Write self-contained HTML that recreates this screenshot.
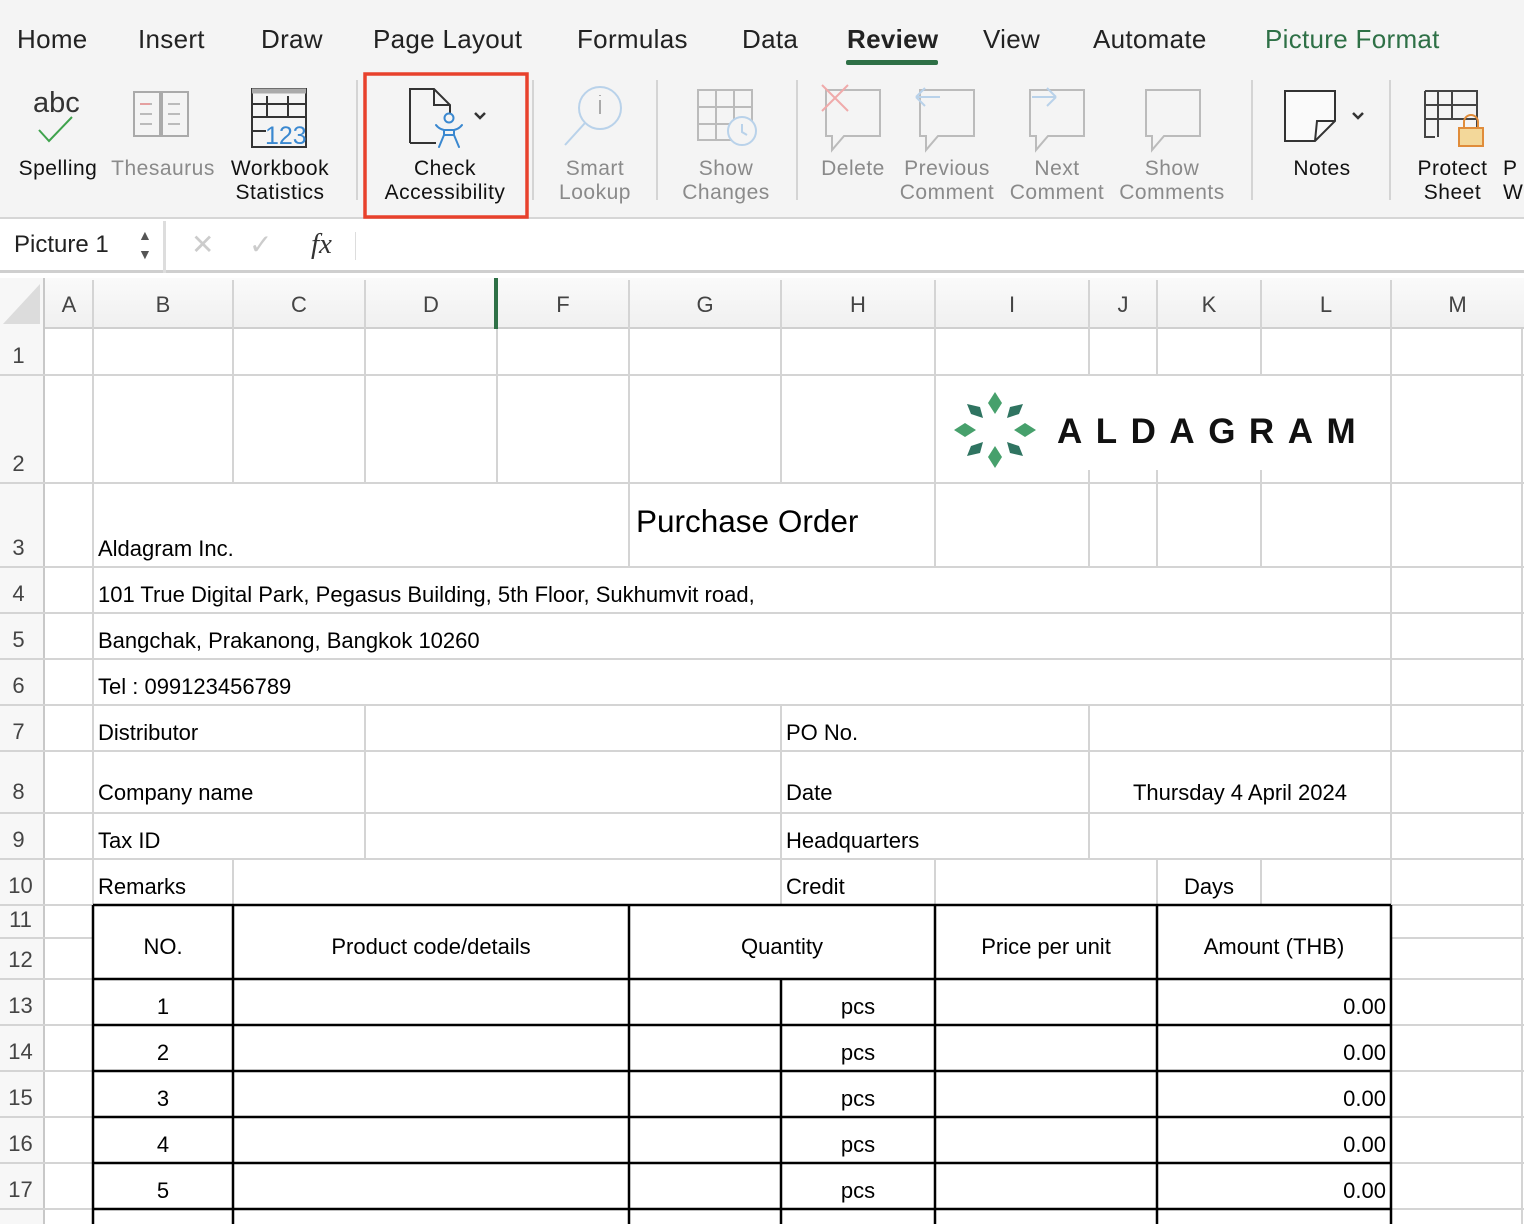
<!DOCTYPE html>
<html><head><meta charset="utf-8"><style>
*{margin:0;padding:0;box-sizing:border-box}
body{width:1524px;height:1224px;overflow:hidden;background:#fff;font-family:"Liberation Sans",sans-serif;position:relative}
.a{position:absolute;white-space:nowrap}
.tab{font-size:26px;color:#222;top:24px;letter-spacing:0.3px}
.rl{font-size:21px;color:#111;text-align:center;line-height:24px;letter-spacing:0.5px}
.g{color:#8a8a8a}
.c{font-size:22px;color:#000}
.rh{font-size:22px;color:#444;width:45px;text-align:center}
.ch{font-size:22px;color:#444;text-align:center;top:292px}
</style></head><body>
<div class="a" style="left:0;top:0;width:1524px;height:219px;background:#f4f4f4;border-bottom:2px solid #d6d6d6"></div>
<div class="a tab" style="left:17px">Home</div>
<div class="a tab" style="left:138px">Insert</div>
<div class="a tab" style="left:261px">Draw</div>
<div class="a tab" style="left:373px">Page Layout</div>
<div class="a tab" style="left:577px">Formulas</div>
<div class="a tab" style="left:742px">Data</div>
<div class="a tab" style="left:847px;font-weight:bold">Review</div>
<div class="a" style="left:846px;top:60px;width:92px;height:5px;background:#2e7046;border-radius:2px"></div>
<div class="a tab" style="left:983px">View</div>
<div class="a tab" style="left:1093px">Automate</div>
<div class="a tab" style="left:1265px;color:#2e7046">Picture Format</div>

<svg class="a" style="left:0;top:0" width="1524" height="220">
<g fill="none" stroke-width="2">
<text x="33" y="112" font-size="29" fill="#333" font-family="Liberation Sans">abc</text>
<path d="M39 130l10 11 23-24" stroke="#3fa34d"/>
<path d="M134 92h26v44h-26zM162 92h26v44h-26z" stroke="#aaa"/>
<path d="M140 104h12M140 114h12M140 124h12M168 104h12M168 114h12M168 124h12" stroke="#bbb"/>
<path d="M140 104h10" stroke="#e5a0a0"/>
<path d="M252 89h54v58h-54z" stroke="#333"/><path d="M252 91h54" stroke="#aaa" stroke-width="5"/>
<path d="M252 104h54M252 117h54M252 131h14M267 96v20M288 96v20" stroke="#333"/>
<text x="265" y="144" font-size="25" fill="#3a88d0" font-family="Liberation Sans">123</text>
<path d="M410 143V89h24l16 16v8M410 143h26" stroke="#333"/><path d="M434 89v16h16" stroke="#333"/>
<circle cx="449" cy="118" r="4.5" stroke="#3a88d0"/>
<path d="M436 125q3 4 8 5h10q5-1 8-5M444 130v5l-5 12M454 130v5l5 12M444 135h10" stroke="#3a88d0" stroke-linejoin="round" stroke-linecap="round"/>
<path d="M475 113l5 5 5-5" stroke="#333" stroke-width="2.5"/>
<circle cx="600" cy="108" r="21" stroke="#b9d2ea"/><path d="M585 123l-20 22" stroke="#b9d2ea"/><path d="M600 100v14M600 95v1" stroke="#aaa"/>
<path d="M698 90h54v50h-54zM698 107h54M698 124h40M716 90v50M734 90v30" stroke="#bbb"/>
<circle cx="742" cy="131" r="14" fill="#f4f4f4" stroke="#b9d2ea"/><path d="M742 124v8l5 3" stroke="#b9d2ea"/>
<path d="M826 90h54v46h-36l-12 14v-14h-6z" stroke="#bbb"/><path d="M822 85l26 26M848 85l-26 26" stroke="#f0aaaa"/>
<path d="M920 90h54v46h-36l-12 14v-14h-6z" stroke="#bbb"/><path d="M916 97h24M916 97l9-9M916 97l9 9" stroke="#b9d2ea"/>
<path d="M1030 90h54v46h-36l-12 14v-14h-6z" stroke="#bbb"/><path d="M1032 97h24M1056 97l-9-9M1056 97l-9 9" stroke="#b9d2ea"/>
<path d="M1146 90h54v46h-36l-12 14v-14h-6z" stroke="#bbb"/>
<path d="M1285 91h50v30l-20 20h-30z" stroke="#333" fill="#fafafa"/><path d="M1335 121h-18l-2 20" stroke="#333"/>
<path d="M1353 113l5 5 5-5" stroke="#333" stroke-width="2.5"/>
<path d="M1425 91h52v42h-18M1425 91v46h10M1425 105h52M1425 119h52M1438 91v46M1452 91v28" stroke="#444"/>
<rect x="1459" y="128" width="24" height="18" fill="#f3d89a" stroke="#e08c3a"/><path d="M1464 128v-6a7 7 0 0 1 14 0v6" stroke="#e08c3a"/>
<path d="M357 80v120M533 80v120M657 80v120M797 80v120M1252 80v120M1390 80v120" stroke="#d4d4d4"/>
</g>
<rect x="365" y="74" width="162" height="143" fill="none" stroke="#e8412c" stroke-width="3.5"/>
</svg>
<div class="a rl" style="left:8px;top:157px;width:100px">Spelling</div>
<div class="a rl g" style="left:108px;top:157px;width:110px">Thesaurus</div>
<div class="a rl" style="left:222px;top:157px;width:116px">Workbook<br>Statistics</div>
<div class="a rl" style="left:370px;top:157px;width:150px">Check<br>Accessibility</div>
<div class="a rl g" style="left:545px;top:157px;width:100px">Smart<br>Lookup</div>
<div class="a rl g" style="left:670px;top:157px;width:112px">Show<br>Changes</div>
<div class="a rl g" style="left:810px;top:157px;width:86px">Delete</div>
<div class="a rl g" style="left:897px;top:157px;width:100px">Previous<br>Comment</div>
<div class="a rl g" style="left:1007px;top:157px;width:100px">Next<br>Comment</div>
<div class="a rl g" style="left:1117px;top:157px;width:110px">Show<br>Comments</div>
<div class="a rl" style="left:1272px;top:157px;width:100px">Notes</div>
<div class="a rl" style="left:1405px;top:157px;width:95px">Protect<br>Sheet</div>
<div class="a rl" style="left:1503px;top:157px;width:40px;text-align:left">P<br>W</div>

<div class="a" style="left:0;top:221px;width:1524px;height:52px;background:#fff;border-bottom:3px solid #cfcfcf"></div>
<div class="a" style="left:163px;top:221px;width:3px;height:52px;background:#ddd"></div>
<div class="a" style="left:14px;top:231px;font-size:24px;color:#222">Picture 1</div>
<div class="a" style="left:138px;top:226px;font-size:14px;color:#555;line-height:19px">▲<br>▼</div>
<div class="a" style="left:191px;top:228px;font-size:28px;color:#ccc">✕</div>
<div class="a" style="left:249px;top:228px;font-size:28px;color:#ccc">✓</div>
<div class="a" style="left:311px;top:228px;font-size:29px;color:#333;font-family:'Liberation Serif',serif;font-style:italic">fx</div>
<div class="a" style="left:355px;top:232px;width:1px;height:28px;background:#ddd"></div>

<div class="a" style="left:0;top:278px;width:1524px;height:51px;background:linear-gradient(#fafafa,#f0f0f0);border-bottom:2px solid #cfcfcf"></div>
<div class="a" style="left:0;top:278px;width:45px;height:946px;background:#f7f7f7;border-right:2px solid #c8c8c8"></div>
<svg class="a" style="left:0;top:0" width="1524" height="1224">
<polygon points="40,284 40,324 3,324" fill="#dcdcdc"/>
<g stroke="#d4d4d4" stroke-width="2" fill="none">
<path d="M93 280v49M233 280v49M365 280v49M629 280v49M781 280v49M935 280v49M1089 280v49M1157 280v49M1261 280v49M1391 280v49"/>
<path d="M0 375H1524M0 483H1524M0 567H1524M0 613H1524M0 659H1524M0 705H1524M0 751H1524M0 813H1524M0 859H1524M0 905H1524"/>
<path d="M0 938H93M1391 938H1524M0 979H93M1391 979H1524M0 1025H93M1391 1025H1524M0 1071H93M1391 1071H1524M0 1117H93M1391 1117H1524M0 1163H93M1391 1163H1524M0 1209H93M1391 1209H1524"/>
<path d="M93 329V905M1391 329V905M1522 329V1224M1391 905V1224"/>
<path d="M233 329V483M365 329V483M497 329V483M629 329V483M781 329V483M935 329V483M1089 329V375M1157 329V375M1261 329V375"/>
<path d="M1089 470V567M1157 470V567M1261 470V567M629 483V567M935 483V567"/>
<path d="M365 705V859M781 705V905M1089 705V859"/>
<path d="M233 859V905M935 859V905M1157 859V905M1261 859V905"/>
</g>
<path d="M496 278V329" stroke="#2e7046" stroke-width="4"/>
<g stroke="#000" stroke-width="2.5" fill="none">
<path d="M93 905H1391M93 979H1391M93 1025H1391M93 1071H1391M93 1117H1391M93 1163H1391M93 1209H1391"/>
<path d="M93 905V1224M233 905V1224M629 905V1224M935 905V1224M1157 905V1224M1391 905V1224M781 979V1224"/>
</g>
<rect x="937" y="377" width="452" height="93" fill="#fff"/>
<g fill="#47a06c">
<polygon points="995,392 1002,403 995,414 988,403"/>
<polygon points="995,446 1002,457 995,468 988,457"/>
<polygon points="954,430 965,423 976,430 965,437"/>
<polygon points="1014,430 1025,423 1036,430 1025,437"/>
</g>
<g fill="#2f7461">
<polygon points="967,404 980,407 983,418 971,414"/>
<polygon points="1023,404 1010,407 1007,418 1019,414"/>
<polygon points="967,456 980,453 983,442 971,446"/>
<polygon points="1023,456 1010,453 1007,442 1019,446"/>
</g>
<text x="1057" y="443" font-size="35" font-weight="bold" fill="#111" font-family="Liberation Sans" letter-spacing="13.5">ALDAGRAM</text>
</svg>

<div class="a ch" style="left:45px;width:48px">A</div>
<div class="a ch" style="left:93px;width:140px">B</div>
<div class="a ch" style="left:233px;width:132px">C</div>
<div class="a ch" style="left:365px;width:132px">D</div>
<div class="a ch" style="left:497px;width:132px">F</div>
<div class="a ch" style="left:629px;width:152px">G</div>
<div class="a ch" style="left:781px;width:154px">H</div>
<div class="a ch" style="left:935px;width:154px">I</div>
<div class="a ch" style="left:1089px;width:68px">J</div>
<div class="a ch" style="left:1157px;width:104px">K</div>
<div class="a ch" style="left:1261px;width:130px">L</div>
<div class="a ch" style="left:1391px;width:133px">M</div>
<div class="a rh" style="left:-4px;top:343px">1</div>
<div class="a rh" style="left:-4px;top:451px">2</div>
<div class="a rh" style="left:-4px;top:535px">3</div>
<div class="a rh" style="left:-4px;top:581px">4</div>
<div class="a rh" style="left:-4px;top:627px">5</div>
<div class="a rh" style="left:-4px;top:673px">6</div>
<div class="a rh" style="left:-4px;top:719px">7</div>
<div class="a rh" style="left:-4px;top:779px">8</div>
<div class="a rh" style="left:-4px;top:827px">9</div>
<div class="a rh" style="left:-2px;top:873px">10</div>
<div class="a rh" style="left:-2px;top:907px">11</div>
<div class="a rh" style="left:-2px;top:947px">12</div>
<div class="a rh" style="left:-2px;top:993px">13</div>
<div class="a rh" style="left:-2px;top:1039px">14</div>
<div class="a rh" style="left:-2px;top:1085px">15</div>
<div class="a rh" style="left:-2px;top:1131px">16</div>
<div class="a rh" style="left:-2px;top:1177px">17</div>

<div class="a" style="left:636px;top:503px;font-size:31.5px;color:#000">Purchase Order</div>
<div class="a c" style="left:98px;top:536px">Aldagram Inc.</div>
<div class="a c" style="left:98px;top:582px">101 True Digital Park, Pegasus Building, 5th Floor, Sukhumvit road,</div>
<div class="a c" style="left:98px;top:628px">Bangchak, Prakanong, Bangkok 10260</div>
<div class="a c" style="left:98px;top:674px">Tel : 099123456789</div>
<div class="a c" style="left:98px;top:720px">Distributor</div>
<div class="a c" style="left:786px;top:720px">PO No.</div>
<div class="a c" style="left:98px;top:780px">Company name</div>
<div class="a c" style="left:786px;top:780px">Date</div>
<div class="a c" style="left:1089px;top:780px;width:302px;text-align:center">Thursday 4 April 2024</div>
<div class="a c" style="left:98px;top:828px">Tax ID</div>
<div class="a c" style="left:786px;top:828px">Headquarters</div>
<div class="a c" style="left:98px;top:874px">Remarks</div>
<div class="a c" style="left:786px;top:874px">Credit</div>
<div class="a c" style="left:1157px;top:874px;width:104px;text-align:center">Days</div>

<div class="a c" style="left:93px;top:934px;width:140px;text-align:center">NO.</div>
<div class="a c" style="left:233px;top:934px;width:396px;text-align:center">Product code/details</div>
<div class="a c" style="left:629px;top:934px;width:306px;text-align:center">Quantity</div>
<div class="a c" style="left:935px;top:934px;width:222px;text-align:center">Price per unit</div>
<div class="a c" style="left:1157px;top:934px;width:234px;text-align:center">Amount (THB)</div>

<div class="a c" style="left:93px;top:994px;width:140px;text-align:center">1</div>
<div class="a c" style="left:781px;top:994px;width:154px;text-align:center">pcs</div>
<div class="a c" style="left:1157px;top:994px;width:229px;text-align:right">0.00</div>
<div class="a c" style="left:93px;top:1040px;width:140px;text-align:center">2</div>
<div class="a c" style="left:781px;top:1040px;width:154px;text-align:center">pcs</div>
<div class="a c" style="left:1157px;top:1040px;width:229px;text-align:right">0.00</div>
<div class="a c" style="left:93px;top:1086px;width:140px;text-align:center">3</div>
<div class="a c" style="left:781px;top:1086px;width:154px;text-align:center">pcs</div>
<div class="a c" style="left:1157px;top:1086px;width:229px;text-align:right">0.00</div>
<div class="a c" style="left:93px;top:1132px;width:140px;text-align:center">4</div>
<div class="a c" style="left:781px;top:1132px;width:154px;text-align:center">pcs</div>
<div class="a c" style="left:1157px;top:1132px;width:229px;text-align:right">0.00</div>
<div class="a c" style="left:93px;top:1178px;width:140px;text-align:center">5</div>
<div class="a c" style="left:781px;top:1178px;width:154px;text-align:center">pcs</div>
<div class="a c" style="left:1157px;top:1178px;width:229px;text-align:right">0.00</div>
</body></html>
